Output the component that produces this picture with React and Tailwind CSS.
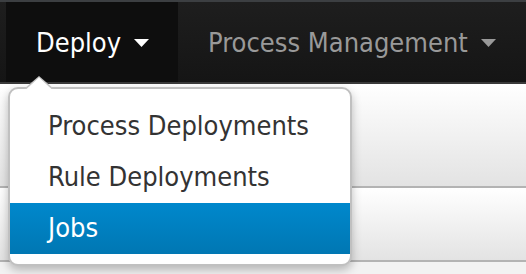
import React from "react";

const font = { fontFamily: '"DejaVu Sans Condensed", "DejaVu Sans", Verdana, sans-serif' };

const Caret = ({ className }) => (
	<svg width="15" height="8" viewBox="0 0 15 8" className={className}>
		<path d="M0 0 L15 0 L7.5 8 Z" fill="currentColor" />
	</svg>
);

const NavItem = ({ label, active }) => (
	<div
		className={`flex h-full items-center gap-[13px] pl-[30px] pr-[29px] ${
			active ? "bg-[#0e0e0e] text-white" : "text-[#999999]"
		}`}
	>
		<span className="text-[27px] leading-none">{label}</span>
		<Caret className="mt-[2px]" />
	</div>
);

const MenuItem = ({ label, selected }) => (
	<div
		className={`flex h-[51px] items-center px-[38px] text-[27px] ${
			selected
				? "bg-gradient-to-b from-[#0088cc] to-[#0077b3] text-white"
				: "text-[#333333]"
		}`}
	>
		{label}
	</div>
);

export default function App() {
	return (
		<div className="relative h-[274px] w-[526px] overflow-hidden bg-[#f2f2f2]" style={font}>
			<div className="h-[2px] bg-[#3c3f42]" />
			<nav className="flex h-[80px] bg-gradient-to-b from-[#1e1e1e] to-[#151515] pl-[6px]">
				<NavItem label="Deploy" active />
				<NavItem label="Process Management" />
			</nav>
			<div className="h-[2px] bg-[#3a3a3a]" />
			<div className="h-[104px] border-b-2 border-[#b3b3b3] bg-gradient-to-b from-[#ffffff] to-[#e3e3e3]" />
			<div className="h-[74px] border-b-2 border-[#b3b3b3] bg-gradient-to-b from-[#ffffff] to-[#e3e3e3]" />

			<div className="absolute left-[8px] top-[87px] w-[344px]">
				<svg
					width="30"
					height="14"
					viewBox="0 0 30 14"
					className="absolute left-[16px] top-[-12px]"
				>
					<path d="M0 14 L15 1 L30 14 Z" fill="#c4c4c4" />
					<path d="M2 14.5 L15 2.5 L28 14.5 Z" fill="#ffffff" />
				</svg>
				<div className="overflow-hidden rounded-[10px] border-2 border-[#c0c0c0] bg-white pb-[10px] pt-[12px] shadow-[0_4px_10px_rgba(0,0,0,0.25)]">
					<MenuItem label="Process Deployments" />
					<MenuItem label="Rule Deployments" />
					<MenuItem label="Jobs" selected />
				</div>
			</div>
		</div>
	);
}
